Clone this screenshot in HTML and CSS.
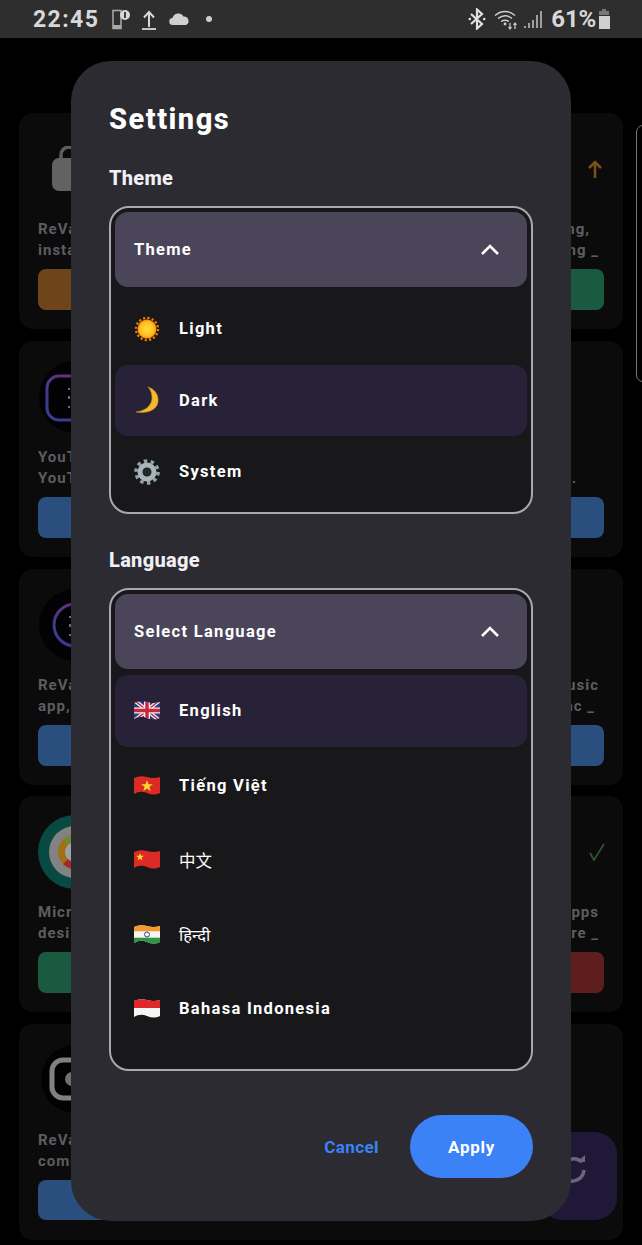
FILE: index.html
```
<!DOCTYPE html>
<html lang="en">
<head>
<meta charset="utf-8">
<title>Settings</title>
<link rel="stylesheet" href="styles.css">
</head>
<body>
<svg class="defs" width="0" height="0" aria-hidden="true"><defs>
  <clipPath id="wave"><path d="M0 3Q6 0 13 2T26 2V18Q20 21 13 18T0 19Z"/></clipPath>
</defs></svg>

<header class="statusbar">
  <div class="status-left">
    <span class="clock">22:45</span>
    <svg class="si" width="20" height="22" viewBox="0 0 20 22"><path d="M2 2.500h8v18H2z" fill="none" stroke="#aaa" stroke-width="1.500"/><path d="M2 17h8v3.500H2z" fill="#aaa"/><circle cx="14" cy="7" r="5" fill="#d8d8d8"/><path d="M14 4v6" stroke="#2e2e2e" stroke-width="1.800"/></svg>
    <svg class="si up" width="16" height="22" viewBox="0 0 16 22"><path d="M8 19V5M3 9.500 8 4l5 5.500" fill="none" stroke="#d8d8d8" stroke-width="2"/><path d="M1 20.500h14" stroke="#d8d8d8" stroke-width="1.800" transform="translate(0 .5)"/></svg>
    <svg class="si cloud" width="21" height="14" viewBox="0 0 21 14"><path d="M4 13a3.500 3.500 0 0 1-.5-7A6 6 0 0 1 14.500 4.500 4.500 4.500 0 0 1 17 13Z" fill="#d0d0d0"/></svg>
    <span class="dot"></span>
  </div>
  <div class="status-right">
    <svg width="18" height="22" viewBox="0 0 18 22"><path d="M3 6l11 10-5 4.500V1.500L14 6 3 16" fill="none" stroke="#e0e0e0" stroke-width="2.200"/><circle cx="1.800" cy="11" r="1.300" fill="#e0e0e0"/><circle cx="16.200" cy="11" r="1.300" fill="#e0e0e0"/></svg>
    <svg class="wifi" width="26" height="22" viewBox="0 0 26 22"><path d="M1 7.500C7 2 15 2 21 7.500M4 10.500c4.500-3.500 9.500-3.500 14 0M7 13.500c3-2 5-2 8 0" fill="none" stroke="#d0d0d0" stroke-width="1.500"/><circle cx="11" cy="16" r="1.400" fill="#d0d0d0"/><path d="M16 15v6M14.500 19l1.500 2 1.500-2M21 21v-6M19.500 17l1.500-2 1.500 2" fill="none" stroke="#d0d0d0" stroke-width="1.200"/></svg>
    <svg class="bars" width="18" height="20" viewBox="0 0 18 20"><path d="M1 19v-2M5 19v-5M9 19v-8M13 19V6M17 19V2" stroke="#bbb" stroke-width="1.600"/></svg>
    <span class="pct">61%</span>
    <svg width="12" height="22" viewBox="0 0 12 22"><path d="M4 1h4v2h3v4H1V3h3z" fill="#777"/><path d="M1 8h11v13H1z" fill="#d0d0d0"/></svg>
  </div>
</header>

<main class="cards">
  <section class="card">
    <div class="card-top">
      <svg class="lock" width="40" height="46" viewBox="0 0 40 46"><path d="M9 14V9a8 8 0 0 1 16 0v5" fill="none" stroke="#5e5e5e" stroke-width="3.500"/><rect x="0" y="12" width="40" height="33" rx="7" fill="#626262"/></svg>
      <svg class="state" width="18" height="20" viewBox="0 0 18 20"><path d="M9 19V3M3 9l6-6 6 6" fill="none" stroke="#7a4f18" stroke-width="2.600"/></svg>
    </div>
    <p class="line"><span>ReVa</span><span class="r3">ng,</span></p>
    <p class="line"><span>insta</span><span class="r1">ng _</span></p>
    <div class="btns"><span class="btn orange"></span><span class="btn green"></span></div>
  </section>

  <section class="card">
    <div class="card-top">
      <svg class="yt" width="74" height="74" viewBox="0 0 74 74"><circle cx="37" cy="37" r="36" fill="#020204"/><defs><linearGradient id="n1" x1="0" y1="1" x2="1" y2="0"><stop offset="0" stop-color="#2f3f96"/><stop offset="1" stop-color="#7a2a72"/></linearGradient></defs><rect x="9" y="16" width="46" height="44" rx="12" fill="none" stroke="url(#n1)" stroke-width="3"/><path d="M31 28v2M31 36v3M31 46v2" stroke="#6a6a78" stroke-width="2"/></svg>
    </div>
    <p class="line"><span>YouT</span></p>
    <p class="line"><span>YouT</span><span class="r2">s.</span></p>
    <div class="btns"><span class="btn blue"></span><span class="btn blue"></span></div>
  </section>

  <section class="card">
    <div class="card-top">
      <svg class="yt" width="74" height="74" viewBox="0 0 74 74"><circle cx="37" cy="37" r="36" fill="#020204"/><circle cx="37" cy="37" r="21" fill="none" stroke="url(#n1)" stroke-width="3"/><path d="M32 28v2M32 36v3M32 46v2" stroke="#6a6a78" stroke-width="2"/></svg>
    </div>
    <p class="line"><span>ReVa</span><span class="r1">usic</span></p>
    <p class="line"><span>app,</span><span class="r4">ac _</span></p>
    <div class="btns"><span class="btn blue"></span><span class="btn blue"></span></div>
  </section>

  <section class="card">
    <div class="card-top">
      <svg class="yt" width="74" height="74" viewBox="0 0 74 74"><circle cx="37" cy="37" r="37" fill="#084a42"/><circle cx="37" cy="37" r="26" fill="#828282"/><circle cx="37" cy="37" r="13.500" fill="none" stroke="#a07016" stroke-width="7"/><path d="M37 23.500A13.500 13.500 0 0 0 27.500 27.500" fill="none" stroke="#6f8a2a" stroke-width="7"/><path d="M27.500 46.500A13.500 13.500 0 0 0 37 50.500" fill="none" stroke="#a32a2a" stroke-width="7"/><circle cx="37" cy="37" r="10" fill="#a0a0a0"/></svg>
      <svg class="state check" width="18" height="20" viewBox="0 0 18 20"><path d="M2 11l4 7L16 2" fill="none" stroke="#2f5a34" stroke-width="1.600"/></svg>
    </div>
    <p class="line"><span>Micr</span><span class="r1">pps</span></p>
    <p class="line"><span>desi</span><span class="r1">are _</span></p>
    <div class="btns"><span class="btn green"></span><span class="btn red"></span></div>
  </section>

  <section class="card">
    <div class="card-top">
      <svg class="yt" width="74" height="74" viewBox="0 0 74 74"><circle cx="37" cy="36" r="34" fill="#020204"/><rect x="14" y="17" width="40" height="38" rx="11" fill="none" stroke="#808080" stroke-width="5"/><circle cx="34" cy="36" r="7" fill="#707070"/></svg>
    </div>
    <p class="line"><span>ReVa</span></p>
    <p class="line"><span>comm</span></p>
    <div class="btns"><span class="btn blue short"></span></div>
  </section>
</main>

<div class="scroll-peek"></div>

<button class="fab" type="button" aria-label="Refresh">
  <svg width="30" height="34" viewBox="0 0 30 34"><path d="M24 9A12 12 0 0 0 4 17M6 25a12 12 0 0 0 20-8" fill="none" stroke="#6b6480" stroke-width="3.500"/><path d="M19 9h8V2z" fill="#6b6480"/></svg>
</button>

<div class="dialog" role="dialog">
  <h1 class="title">Settings</h1>

  <h2 class="label">Theme</h2>
  <div class="select">
    <div class="select-head"><span>Theme</span>
      <svg class="chev" width="20" height="13" viewBox="0 0 20 13"><path d="M2 11l8-8 8 8" fill="none" stroke="#fff" stroke-width="2.600"/></svg>
    </div>
    <div class="opt">
      <svg class="emo" width="26" height="26" viewBox="0 0 26 26"><defs><radialGradient id="sun"><stop offset="0" stop-color="#ffdc3c"/><stop offset=".7" stop-color="#ffc020"/><stop offset="1" stop-color="#f58c0c"/></radialGradient></defs><circle cx="13" cy="13" r="11" fill="none" stroke="#e8780c" stroke-width="2.400" stroke-dasharray="2.200 2.120"/><circle cx="13" cy="13" r="9.500" fill="url(#sun)"/></svg>
      <span>Light</span>
    </div>
    <div class="opt on">
      <svg class="emo" width="26" height="28" viewBox="0 0 26 28"><path d="M14 1C20 3 25 8 24 16 23 23 15 28 2 26 10 25 17 21 18 13 18 8 17 4 14 1Z" fill="#f4b92d" stroke="#c98a1a" stroke-width=".6"/></svg>
      <span>Dark</span>
    </div>
    <div class="opt">
      <svg class="emo" width="26" height="26" viewBox="0 0 26 26"><circle cx="13" cy="13" r="11" fill="none" stroke="#93a1a8" stroke-width="3.600" stroke-dasharray="3.400 3.500"/><circle cx="13" cy="13" r="7" fill="none" stroke="#a9b5ba" stroke-width="5"/><circle cx="13" cy="13" r="4" fill="#22282c"/></svg>
      <span>System</span>
    </div>
  </div>

  <h2 class="label lang-label">Language</h2>
  <div class="select lang">
    <div class="select-head"><span>Select Language</span>
      <svg class="chev" width="20" height="13" viewBox="0 0 20 13"><path d="M2 11l8-8 8 8" fill="none" stroke="#fff" stroke-width="2.600"/></svg>
    </div>
    <div class="opt on">
      <svg class="emo" width="26" height="21" viewBox="0 0 26 21"><g clip-path="url(#wave)"><rect width="26" height="21" fill="#2b3a86"/><path d="M0 0 26 21M26 0 0 21" stroke="#eee" stroke-width="4"/><path d="M0 0 26 21M26 0 0 21" stroke="#c8283c" stroke-width="1.400"/><path d="M13 0v21M0 10.500h26" stroke="#eee" stroke-width="6"/><path d="M13 0v21M0 10.500h26" stroke="#c8283c" stroke-width="3.400"/></g></svg>
      <span>English</span>
    </div>
    <div class="opt">
      <svg class="emo" width="26" height="21" viewBox="0 0 26 21"><g clip-path="url(#wave)"><rect width="26" height="21" fill="#dc2a26"/></g><path d="M13 5l1.500 4.200h4.400l-3.500 2.600 1.300 4.200-3.700-2.600-3.700 2.600 1.300-4.200-3.500-2.600h4.400z" fill="#ffd92e"/></svg>
      <span>Tiếng Việt</span>
    </div>
    <div class="opt">
      <svg class="emo" width="26" height="21" viewBox="0 0 26 21"><g clip-path="url(#wave)"><rect width="26" height="21" fill="#dc2a26"/></g><path d="M6 4l1 2.800h3L7.600 8.600l.9 2.900L6 9.800l-2.500 1.700.9-2.900L2 6.800h3z" fill="#ffd92e"/></svg>
      <span class="native">中文</span>
    </div>
    <div class="opt">
      <svg class="emo" width="26" height="21" viewBox="0 0 26 21"><g clip-path="url(#wave)"><rect width="26" height="21" fill="#f5f5f5"/><rect width="26" height="7.300" fill="#f39a2f"/><rect y="13.700" width="26" height="8" fill="#2f9440"/></g><circle cx="13" cy="10.500" r="2.500" fill="none" stroke="#3a4a90" stroke-width="1"/></svg>
      <span class="native">हिन्दी</span>
    </div>
    <div class="opt">
      <svg class="emo" width="26" height="21" viewBox="0 0 26 21"><g clip-path="url(#wave)"><rect width="26" height="21" fill="#f5f5f5"/><rect width="26" height="10" fill="#e0282c"/></g></svg>
      <span>Bahasa Indonesia</span>
    </div>
  </div>

  <div class="actions">
    <button class="cancel" type="button">Cancel</button>
    <button class="apply" type="button">Apply</button>
  </div>
</div>
</body>
</html>
```

FILE: styles.css
```
* { box-sizing: border-box; }

html, body { margin: 0; padding: 0; }

body {
  position: relative;
  width: 642px;
  height: 1245px;
  overflow: hidden;
  background: #000;
  color: #fff;
  font-family: Roboto, "Noto Sans", "Noto Sans CJK SC", sans-serif;
}

.defs { position: absolute; }

.statusbar {
  height: 38px;
  background: #2e2e2e;
  display: flex;
  align-items: center;
  justify-content: space-between;
  padding: 0 32px 0 33px;
  color: #d8d8d8;
  font-weight: 700;
}

.status-left, .status-right { display: flex; align-items: center; }

.clock { font-size: 23px; letter-spacing: 1.400px; width: 78px; }
.si.up { margin-left: 10px; }
.si.cloud { margin-left: 12px; }
.dot { width: 6px; height: 6px; border-radius: 50%; background: #ccc; margin-left: 16px; }
.wifi { margin-left: 8px; }
.bars { margin-left: 4px; }
.pct { font-size: 24px; margin-left: 9px; margin-right: 2px; letter-spacing: -.200px; }

.cards {
  padding: 75px 19px 0;
  display: flex;
  flex-direction: column;
  gap: 11.750px;
}

.card {
  flex: none;
  height: 216px;
  background: #0b0b0c;
  border-radius: 14px;
  padding: 19px 19px 18px;
  display: flex;
  flex-direction: column;
}

.card-top {
  flex: none;
  height: 74px;
  margin-bottom: 13px;
  display: flex;
  align-items: center;
  justify-content: space-between;
}

.lock { margin-left: 14px; }
.check { margin-right: -2px; }

.line {
  flex: none;
  margin: 0;
  height: 21px;
  line-height: 21px;
  font-size: 15px;
  font-weight: 700;
  letter-spacing: 1px;
  color: #5d5d5f;
  display: flex;
  justify-content: space-between;
}

.r1 { padding-right: 5px; }
.r2 { padding-right: 27px; }
.r3 { padding-right: 14px; }
.r4 { padding-right: 9px; }

.btns { flex: none; margin-top: 8px; height: 41px; display: flex; justify-content: space-between; }
.btn { display: block; width: 280px; height: 41px; border-radius: 8px; }
.btn.short { width: 90px; height: 40px; }
.orange { background: #6e441b; }
.green { background: #1a5a40; }
.blue { background: #2a4e7e; }
.red { background: #5e1e1e; }

.scroll-peek {
  position: absolute;
  left: 636px;
  top: 125px;
  width: 20px;
  height: 257px;
  border: 1px solid #77777a;
  border-radius: 7px;
}

.fab {
  position: absolute;
  left: 540px;
  top: 1132px;
  width: 77px;
  height: 88px;
  padding: 0 11px 10px 0;
  border: 0;
  border-radius: 22px;
  background: #1f1836;
}

.dialog {
  position: absolute;
  left: 71px;
  top: 61px;
  width: 500px;
  height: 1160px;
  padding: 38px 38px 0;
  background: #2b2b31;
  border-radius: 40px;
}

.title {
  margin: 0;
  height: 40px;
  line-height: 40px;
  font-size: 29px;
  font-weight: 800;
  letter-spacing: 1.500px;
  color: #fff;
}

.label {
  margin: 29px 0 0;
  height: 20px;
  line-height: 20px;
  font-size: 20px;
  font-weight: 800;
  letter-spacing: .300px;
  color: #f0f0f4;
}

.lang-label { margin-top: 36px; }

.select {
  margin-top: 18px;
  width: 424px;
  height: 308px;
  padding: 4px;
  border: 2px solid #a9a9ad;
  border-radius: 20px;
  background: #18181b;
}

.lang { height: 483px; display: flex; flex-direction: column; gap: 3px; }

.select-head {
  height: 75px;
  margin-bottom: 6px;
  padding: 0 27px 0 19px;
  border-radius: 13px;
  background: #4a4558;
  display: flex;
  align-items: center;
  justify-content: space-between;
  font-size: 16.500px;
  font-weight: 700;
  letter-spacing: 1.300px;
}

.lang .select-head { margin-bottom: 3px; }

.opt {
  height: 71.500px;
  flex: none;
  padding-left: 19px;
  border-radius: 13px;
  display: flex;
  align-items: center;
  font-size: 16.500px;
  font-weight: 700;
  letter-spacing: 1.300px;
}

.opt.on { background: #272238; }

.emo { flex: none; margin-right: 19px; }

.native { font-weight: 400; font-family: "Noto Sans CJK SC", "Noto Sans", sans-serif; letter-spacing: 0; }

.actions {
  margin-top: 44px;
  display: flex;
  justify-content: flex-end;
  align-items: center;
  gap: 31px;
}

.cancel, .apply {
  border: 0;
  padding: 0;
  font-family: inherit;
  font-size: 17px;
  font-weight: 700;
  letter-spacing: .700px;
}

.cancel { background: none; color: #3b82f6; letter-spacing: .400px; }

.apply {
  width: 123px;
  height: 63px;
  border-radius: 32px;
  background: #3b82f6;
  color: #fff;
}
```
